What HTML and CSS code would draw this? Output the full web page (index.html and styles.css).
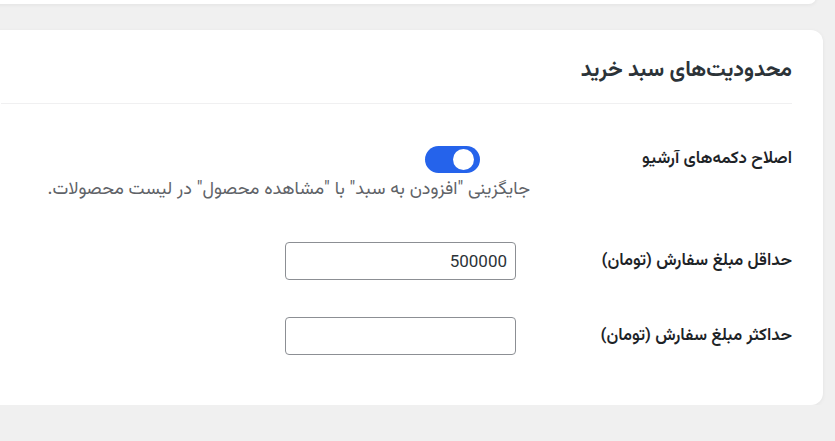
FILE: index.html
```html
<!DOCTYPE html>
<html lang="fa" dir="rtl">
<head>
    <meta charset="UTF-8">
    <meta name="viewport" content="width=device-width, initial-scale=1.0">
    <title>تنظیمات سبد خرید</title>
    <link rel="stylesheet" href="styles.css">
</head>
<body>
    <div class="wrap">
        <div class="card card-top"></div>

        <div class="card card-main">
            <h2 class="card-title">محدودیت‌های سبد خرید</h2>

            <div class="form-row row-toggle">
                <div class="form-label">اصلاح دکمه‌های آرشیو</div>
                <div class="form-field">
                    <label class="switch">
                        <input type="checkbox" checked>
                        <span class="slider"></span>
                    </label>
                    <p class="description">جایگزینی "افزودن به سبد" با "مشاهده محصول" در لیست محصولات.</p>
                </div>
            </div>

            <div class="form-row">
                <div class="form-label">حداقل مبلغ سفارش (تومان)</div>
                <div class="form-field">
                    <input class="text-input" type="text" value="500000">
                </div>
            </div>

            <div class="form-row">
                <div class="form-label">حداکثر مبلغ سفارش (تومان)</div>
                <div class="form-field">
                    <input class="text-input" type="text" value="">
                </div>
            </div>
        </div>
    </div>
</body>
</html>
```

FILE: styles.css
```css
html, body {
    margin: 0;
    padding: 0;
}
body {
    font-family: "Vazirmatn", "Noto Sans Arabic", "DejaVu Sans", sans-serif;
    background-color: #f0f0f0;
    color: #1d2327;
    overflow: hidden;
}
.wrap {
    width: 853px;
    margin-right: 12px;
    margin-left: -30px;
}
.card {
    background-color: #fff;
    border-radius: 12px;
    box-shadow: 0 1px 4px rgba(0,0,0,0.06);
}
.card-top {
    height: 14px;
    margin-top: -10px;
    margin-right: 7px;
    border-radius: 8px;
}
.card-main {
    margin-top: 26px;
    padding: 27px 31px 50px 31px;
}
.card-title {
    margin: 0;
    font-size: 21.5px;
    line-height: 28px;
    font-weight: 700;
    color: #2c3338;
    padding-bottom: 18px;
    border-bottom: 1px solid #f0f0f1;
}
.form-row {
    display: grid;
    grid-template-columns: 262px 1fr;
    align-items: center;
    margin-top: 37px;
}
.row-toggle {
    margin-top: 42px;
    align-items: start;
}
.row-toggle + .form-row {
    margin-top: 41px;
}
.row-toggle .form-label {
    line-height: 27px;
}
.form-label {
    font-size: 17px;
    font-weight: 600;
    color: #1d2327;
}
.form-field {
    display: flex;
    flex-direction: column;
    align-items: flex-start;
}
.switch {
    position: relative;
    display: inline-block;
    width: 55px;
    height: 27px;
    margin-right: 50px;
}
.switch input {
    opacity: 0;
    width: 0;
    height: 0;
    margin: 0;
}
.slider {
    position: absolute;
    inset: 0;
    background-color: #2563eb;
    border-radius: 14px;
    cursor: pointer;
}
.slider::before {
    content: "";
    position: absolute;
    top: 3px;
    left: 28px;
    width: 21px;
    height: 21px;
    background-color: #fff;
    border-radius: 50%;
}
.description {
    margin: 6px 0 0 0;
    font-size: 18px;
    line-height: 22px;
    font-weight: 400;
    color: #5f6368;
}
.text-input {
    box-sizing: border-box;
    width: 231px;
    height: 38px;
    margin-right: 14px;
    padding: 0 8px;
    border: 1px solid #8c8f94;
    border-radius: 4px;
    font-family: Roboto, "Liberation Sans", sans-serif;
    font-size: 17px;
    color: #2c3338;
    background: #fff;
    text-align: right;
    direction: ltr;
}
```
